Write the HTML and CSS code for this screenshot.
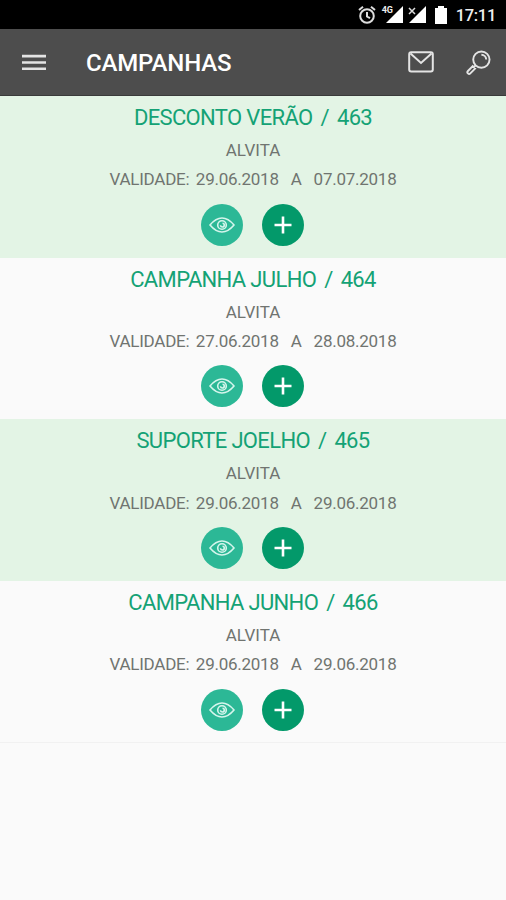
FILE: index.html
```html
<!DOCTYPE html>
<html lang="pt">
<head>
    <meta charset="UTF-8">
    <meta name="viewport" content="width=device-width, initial-scale=1.0">
    <title>Campanhas</title>
    <link rel="stylesheet" href="styles.css">
</head>
<body>
    <!-- Shared icons -->
    <svg class="sprite">
        <symbol id="eye" viewBox="0 0 26 18">
            <path d="M1 9C5 4.200 9 2 13 2s8 2.200 12 7c-4 4.800-8 7-12 7S5 13.800 1 9z"/>
            <circle cx="13" cy="9" r="4.300"/>
            <path d="M13.500 7.200a1.900 1.900 0 1 1-2 2"/>
        </symbol>
        <symbol id="plus" viewBox="0 0 18 18">
            <path d="M9 0.500v17M0.500 9h17"/>
        </symbol>
    </svg>

    <div class="status-bar">
        <svg class="alarm" width="18" height="20" viewBox="0 0 18 20">
            <circle cx="9" cy="11" r="6.800"/>
            <path d="M9 7v4.500l3 1.700M1 5l4-3.300M17 5l-4-3.300"/>
        </svg>
        <div class="signal">
            <svg width="17" height="17" viewBox="0 0 17 17"><path d="M17 0v17H0z"/></svg>
            <span class="network">4G</span>
        </div>
        <div class="signal">
            <svg width="17" height="17" viewBox="0 0 17 17"><path d="M17 0v17H0z"/></svg>
            <svg class="no-network" width="8" height="8" viewBox="0 0 8 8"><path d="M1 1l6 6M7 1L1 7"/></svg>
        </div>
        <svg class="battery" width="12" height="18" viewBox="0 0 12 18"><path d="M3 0h6v2h3v16H0V2h3z"/></svg>
        <span class="clock">17:11</span>
    </div>

    <header class="toolbar">
        <button class="menu" aria-label="Menu">
            <svg width="24" height="16" viewBox="0 0 24 16"><path d="M0 2.100h24M0 8.500h24M0 14.900h24"/></svg>
        </button>
        <h1>CAMPANHAS</h1>
        <button class="mail" aria-label="Mensagens">
            <svg width="26" height="22" viewBox="0 0 26 22">
                <rect x="1.200" y="1.200" width="23.600" height="19.300" rx="2"/>
                <path d="M2.500 2.500l10.500 9.500 10.500-9.500"/>
            </svg>
        </button>
        <button class="search" aria-label="Pesquisar">
            <svg width="25" height="25" viewBox="0 0 26 26">
                <circle cx="16" cy="10" r="8.500"/>
                <path d="M16 5a5 5 0 0 1 5 5"/>
                <path d="M10 16l-2.200 2.200M7 16.800l2.500 2.500-5 5a1.500 1.500 0 0 1-2.500-2.500z"/>
            </svg>
        </button>
    </header>

    <main class="campaigns">
        <section class="campaign">
            <h2><span>DESCONTO VERÃO</span><span>/</span><span>463</span></h2>
            <p class="brand">ALVITA</p>
            <p class="dates"><span>VALIDADE:</span><span>29.06.2018</span><span class="to">A</span><span>07.07.2018</span></p>
            <div class="actions">
                <button class="btn-view" aria-label="Ver"><svg width="26" height="18"><use href="#eye"/></svg></button>
                <button class="btn-add" aria-label="Adicionar"><svg width="18" height="18"><use href="#plus"/></svg></button>
            </div>
        </section>
        <section class="campaign">
            <h2><span>CAMPANHA JULHO</span><span>/</span><span>464</span></h2>
            <p class="brand">ALVITA</p>
            <p class="dates"><span>VALIDADE:</span><span>27.06.2018</span><span class="to">A</span><span>28.08.2018</span></p>
            <div class="actions">
                <button class="btn-view" aria-label="Ver"><svg width="26" height="18"><use href="#eye"/></svg></button>
                <button class="btn-add" aria-label="Adicionar"><svg width="18" height="18"><use href="#plus"/></svg></button>
            </div>
        </section>
        <section class="campaign">
            <h2><span>SUPORTE JOELHO</span><span>/</span><span>465</span></h2>
            <p class="brand">ALVITA</p>
            <p class="dates"><span>VALIDADE:</span><span>29.06.2018</span><span class="to">A</span><span>29.06.2018</span></p>
            <div class="actions">
                <button class="btn-view" aria-label="Ver"><svg width="26" height="18"><use href="#eye"/></svg></button>
                <button class="btn-add" aria-label="Adicionar"><svg width="18" height="18"><use href="#plus"/></svg></button>
            </div>
        </section>
        <section class="campaign">
            <h2><span>CAMPANHA JUNHO</span><span>/</span><span>466</span></h2>
            <p class="brand">ALVITA</p>
            <p class="dates"><span>VALIDADE:</span><span>29.06.2018</span><span class="to">A</span><span>29.06.2018</span></p>
            <div class="actions">
                <button class="btn-view" aria-label="Ver"><svg width="26" height="18"><use href="#eye"/></svg></button>
                <button class="btn-add" aria-label="Adicionar"><svg width="18" height="18"><use href="#plus"/></svg></button>
            </div>
        </section>
    </main>
</body>
</html>
```
FILE: styles.css
```css
* {
    margin: 0;
    padding: 0;
    box-sizing: border-box;
}

body {
    font-family: Roboto, sans-serif;
    background: #fafafa;
    min-height: 100vh;
}

button {
    display: flex;
    align-items: center;
    justify-content: center;
    border: none;
    background: none;
    cursor: pointer;
}

svg {
    display: block;
    fill: none;
    stroke: #fff;
}

.sprite {
    display: none;
}

.status-bar {
    display: flex;
    justify-content: flex-end;
    align-items: center;
    height: 29px;
    padding-right: 10px;
    background: #000;
    color: #eee;
}

.alarm {
    stroke: #ddd;
    stroke-width: 2;
    margin-right: 10px;
}

.signal {
    position: relative;
    margin-right: 6px;
}

.signal svg {
    fill: #fff;
    stroke: none;
}

.network {
    position: absolute;
    top: -1px;
    left: -4px;
    font-size: 9px;
    font-weight: 700;
    line-height: 10px;
}

.signal .no-network {
    position: absolute;
    top: 1px;
    left: -1px;
    stroke: #ddd;
    stroke-width: 1.5;
}

.battery {
    fill: #fff;
    stroke: none;
    margin: 0 9px 0 3px;
}

.clock {
    font-size: 16.5px;
    font-weight: 500;
    letter-spacing: -0.3px;
    line-height: 29px;
    padding-top: 2px;
}

.toolbar {
    display: flex;
    align-items: center;
    height: 67px;
    padding: 0 15px 0 22px;
    background: #4d4d4d;
    border-bottom: 1px solid #3a3a3a;
}

.toolbar svg {
    stroke: #e4e4e4;
    stroke-width: 2;
}

.toolbar .menu svg {
    stroke-width: 2.6;
}

.toolbar h1 {
    flex: 1;
    margin-left: 40px;
    padding-top: 2px;
    color: #fff;
    font-size: 24px;
    font-weight: 500;
    letter-spacing: -0.15px;
}

.mail {
    margin-right: 32px;
}

.campaign {
    height: 161.65px;
    padding-top: 8px;
    text-align: center;
}

.campaign:nth-child(odd) {
    background: #e3f4e5;
}

.campaign:last-child {
    border-bottom: 1px solid #f1f1f1;
}

.campaign h2 {
    display: flex;
    justify-content: center;
    gap: 8px;
    color: #14a275;
    font-size: 22px;
    font-weight: 400;
    letter-spacing: -0.65px;
    line-height: 28px;
}

.campaign p {
    color: #707470;
    font-size: 17px;
    line-height: 20px;
}

.campaign .brand {
    margin-top: 8px;
}

.campaign .dates {
    display: flex;
    justify-content: center;
    gap: 6.5px;
    margin-top: 9.4px;
    letter-spacing: -0.25px;
}

.dates .to {
    margin: 0 5.5px;
}

.actions {
    display: flex;
    justify-content: center;
    gap: 19px;
    margin-top: 14.4px;
    padding-right: 1px;
}

.actions button {
    width: 42px;
    height: 42px;
    border-radius: 50%;
}

.btn-view {
    background: #2cb896;
}

.btn-view svg {
    stroke: #d5f5ec;
    stroke-width: 1.6;
}

.btn-add {
    background: #03996a;
}

.btn-add svg {
    stroke-width: 2.6;
}
```
